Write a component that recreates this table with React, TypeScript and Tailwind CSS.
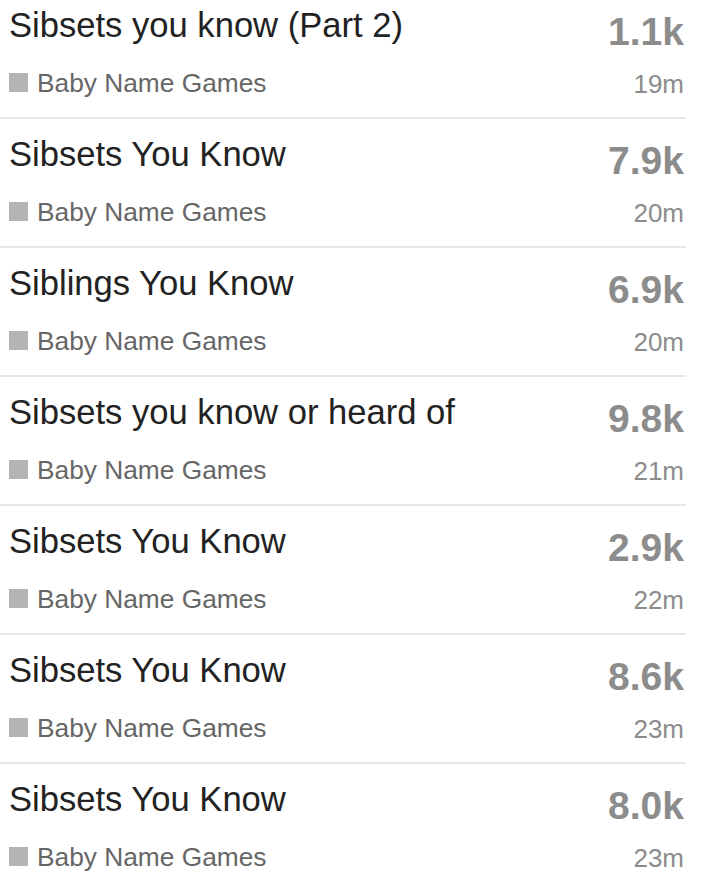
import React from "react";

const rows = [
  { title: "Sibsets you know (Part 2)", count: "1.1k", time: "19m" },
  { title: "Sibsets You Know", count: "7.9k", time: "20m" },
  { title: "Siblings You Know", count: "6.9k", time: "20m" },
  { title: "Sibsets you know or heard of", count: "9.8k", time: "21m" },
  { title: "Sibsets You Know", count: "2.9k", time: "22m" },
  { title: "Sibsets You Know", count: "8.6k", time: "23m" },
  { title: "Sibsets You Know", count: "8.0k", time: "23m" },
];

export default function App() {
  return (
    <div
      className="w-[705px] h-[888px] overflow-hidden bg-white"
      style={{ fontFamily: '"Liberation Sans", Arial, Helvetica, sans-serif' }}
    >
      <div className="-mt-[10px]">
        {rows.map((r, i) => (
          <div
            key={i}
            className="w-[686px] h-[129px] pt-[10px] pl-[9px] pr-[2px] border-b-2 border-[#e6e6e6] flex flex-col"
          >
            <div className="h-[58px] flex justify-between items-start">
              <div className="mt-[8px] text-[34.6px] leading-none text-[#222222]">{r.title}</div>
              <div className="mt-[12px] text-[39px] leading-none font-bold text-[#8c8c8c]">{r.count}</div>
            </div>
            <div className="h-[59px] flex justify-between items-start">
              <div className="flex items-start">
                <div className="mt-[15px] w-[19px] h-[19px] bg-[#b3b3b3]" />
                <div className="ml-[9px] mt-[12px] text-[26.3px] leading-none text-[#666666]">Baby Name Games</div>
              </div>
              <div className="mt-[13px] text-[26px] leading-none text-[#8c8c8c]">{r.time}</div>
            </div>
          </div>
        ))}
      </div>
    </div>
  );
}
